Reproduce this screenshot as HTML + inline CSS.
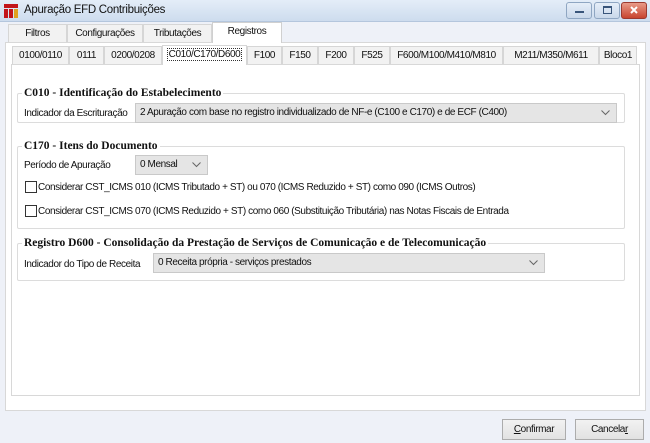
<!DOCTYPE html>
<html><head><meta charset="utf-8">
<style>
*{margin:0;padding:0;box-sizing:border-box}
body{width:650px;height:443px;overflow:hidden;background:#eef1f8;font-family:"Liberation Sans",sans-serif;font-size:10px;letter-spacing:-0.4px;color:#111;position:relative}
.a{position:absolute;white-space:nowrap}
.title{left:0;top:0;width:650px;height:22px;background:linear-gradient(#e4edf8,#cddcee);border-bottom:1px solid #b4c6dd}
.tab{position:absolute;height:18px;line-height:17px;text-align:center;border:1px solid #d6d6d6;border-bottom:none;background:#f2f2f2;white-space:nowrap;overflow:hidden}
.panel{background:#fff;border:1px solid #d8d8d8}
.grp{position:absolute;border:1px solid #dcdcdc;border-radius:2px}
.gt{position:absolute;top:-8px;left:4px;background:#fff;padding:0 2px;font-family:"Liberation Serif",serif;font-weight:bold;font-size:11.5px;letter-spacing:0;line-height:14px;white-space:nowrap}
.sel{position:absolute;height:20px;background:#e5e5e5;border:1px solid #c9c9c9;line-height:18px;padding-left:4px;white-space:nowrap}
.sel svg{position:absolute;right:6px;top:6px}
.cb{position:absolute;width:12px;height:12px;border:1px solid #333;background:#fff}
.btn{position:absolute;height:21px;border:1px solid #acacac;background:linear-gradient(#f2f2f2,#e2e2e2);text-align:center;line-height:19px}
</style></head><body>
<div class="a title">
  <div class="a" style="left:4px;top:4px;width:14px;height:14px">
    <div class="a" style="left:0;top:0;width:14px;height:4px;background:#c2141a"></div>
    <div class="a" style="left:0;top:5px;width:4px;height:9px;background:#c2141a"></div>
    <div class="a" style="left:5px;top:5px;width:4px;height:9px;background:#c2141a"></div>
    <div class="a" style="left:10px;top:5px;width:4px;height:9px;background:#e0a020"></div>
  </div>
  <div class="a" style="left:24px;top:4px;font-size:11.5px;letter-spacing:-0.3px">Apuração EFD Contribuições</div>
  <div class="a" style="left:566px;top:2px;width:26px;height:17px;border:1px solid #8fa6c2;border-radius:3px;background:linear-gradient(#e6eef8,#c9d8ea)"><svg width="24" height="15"><rect x="8" y="8" width="9" height="2" fill="#39557a"/></svg></div>
  <div class="a" style="left:594px;top:2px;width:26px;height:17px;border:1px solid #8fa6c2;border-radius:3px;background:linear-gradient(#e6eef8,#c9d8ea)"><svg width="24" height="15"><rect x="8.5" y="3.5" width="8" height="7" fill="none" stroke="#39557a"/><rect x="8" y="3" width="9" height="2" fill="#39557a"/></svg></div>
  <div class="a" style="left:621px;top:2px;width:26px;height:17px;border:1px solid #9c3a30;border-radius:3px;background:linear-gradient(#e89a88,#c8452f)"><svg width="24" height="15"><path d="M9 4L15 10M15 4L9 10" stroke="#fff" stroke-width="2"/></svg></div>
</div>

<div class="a panel" style="left:5px;top:42px;width:641px;height:369px;background:#fff"></div>
<div class="tab" style="left:8px;top:24px;width:59px">Filtros</div>
<div class="tab" style="left:67px;top:24px;width:76px">Configurações</div>
<div class="tab" style="left:143px;top:24px;width:69px">Tributações</div>
<div class="tab" style="left:212px;top:22px;width:70px;height:21px;background:#fff;border-color:#d0d0d0">Registros</div>

<div class="a panel" style="left:11px;top:64px;width:629px;height:332px"></div>
<div class="tab" style="left:12px;top:46px;width:57px">0100/0110</div>
<div class="tab" style="left:69px;top:46px;width:35px">0111</div>
<div class="tab" style="left:104px;top:46px;width:58px">0200/0208</div>
<div class="tab" style="left:162px;top:45px;width:85px;height:20px;background:#fff"><span style="border:1px dotted #333;padding:0 1px">C010/C170/D600</span></div>
<div class="tab" style="left:247px;top:46px;width:35px">F100</div>
<div class="tab" style="left:282px;top:46px;width:36px">F150</div>
<div class="tab" style="left:318px;top:46px;width:36px">F200</div>
<div class="tab" style="left:354px;top:46px;width:36px">F525</div>
<div class="tab" style="left:390px;top:46px;width:113px">F600/M100/M410/M810</div>
<div class="tab" style="left:503px;top:46px;width:96px">M211/M350/M611</div>
<div class="tab" style="left:599px;top:46px;width:38px">Bloco1</div>

<div class="grp" style="left:17px;top:93px;width:608px;height:30px">
  <div class="gt">C010 - Identificação do Estabelecimento</div>
</div>
<div class="a" style="left:24px;top:108px">Indicador da Escrituração</div>
<div class="sel" style="left:135px;top:103px;width:482px">2 Apuração com base no registro individualizado de NF-e (C100 e C170) e de ECF (C400)<svg width="9" height="6"><path d="M0.5 0.5L4.5 4.5L8.5 0.5" fill="none" stroke="#666"/></svg></div>

<div class="grp" style="left:17px;top:146px;width:608px;height:83px">
  <div class="gt">C170 - Itens do Documento</div>
</div>
<div class="a" style="left:24px;top:160px">Período de Apuração</div>
<div class="sel" style="left:135px;top:155px;width:73px">0 Mensal<svg width="9" height="6"><path d="M0.5 0.5L4.5 4.5L8.5 0.5" fill="none" stroke="#666"/></svg></div>
<div class="cb" style="left:25px;top:181px"></div>
<div class="a" style="left:38px;top:182px">Considerar CST_ICMS 010 (ICMS Tributado + ST) ou 070 (ICMS Reduzido + ST) como 090 (ICMS Outros)</div>
<div class="cb" style="left:25px;top:205px"></div>
<div class="a" style="left:38px;top:206px">Considerar CST_ICMS 070 (ICMS Reduzido + ST) como 060 (Substituição Tributária) nas Notas Fiscais de Entrada</div>

<div class="grp" style="left:17px;top:243px;width:608px;height:38px">
  <div class="gt">Registro D600 - Consolidação da Prestação de Serviços de Comunicação e de Telecomunicação</div>
</div>
<div class="a" style="left:24px;top:259px">Indicador do Tipo de Receita</div>
<div class="sel" style="left:153px;top:253px;width:392px">0 Receita própria - serviços prestados<svg width="9" height="6"><path d="M0.5 0.5L4.5 4.5L8.5 0.5" fill="none" stroke="#666"/></svg></div>

<div class="btn" style="left:502px;top:419px;width:64px"><u>C</u>onfirmar</div>
<div class="btn" style="left:575px;top:419px;width:69px">Cancela<u>r</u></div>
</body></html>
